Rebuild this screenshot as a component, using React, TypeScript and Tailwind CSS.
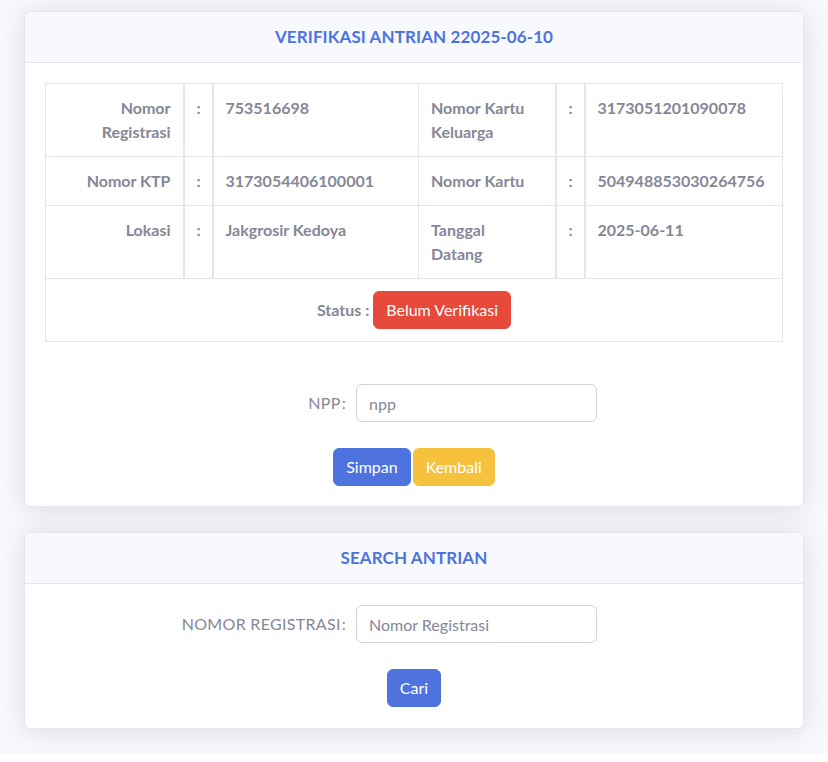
import React from "react";

const font = { fontFamily: "Lato, 'Noto Sans', sans-serif" };

function CardHeader({ title }: { title: string }) {
  return (
    <div className="bg-[#f8f9fc] border-b border-[#e3e6f0] py-[13px] text-center rounded-t-[6px]">
      <h6 className="text-[17px] leading-6 font-bold text-[#4e73df] tracking-[0.1px]">{title}</h6>
    </div>
  );
}

function Field({ label, placeholder }: { label: string; placeholder: string }) {
  return (
    <div className="flex items-center">
      <label className="w-[311px] pr-[10px] text-right text-[#858796] text-[16px] tracking-[0.3px]">
        {label}
        <span className="ml-[1px]">:</span>
      </label>
      <input
        placeholder={placeholder}
        className="w-[241px] h-[38px] px-3 border border-[#d1d3e2] rounded-[6px] text-[16px] text-[#6e707e] placeholder:text-[#858796] outline-none"
      />
    </div>
  );
}

const td = "border border-[#e3e6f0] p-3 align-top leading-6";

export default function App() {
  return (
    <div style={font} className="bg-[#f8f9fc] px-[24px] pt-[11px] pb-[25px] flex flex-col gap-[25px]">
      <div className="bg-white border border-[#e3e6f0] rounded-[6px] shadow-[0_2px_28px_0_rgba(58,59,69,0.15)]">
        <CardHeader title="VERIFIKASI ANTRIAN 22025-06-10" />
        <div className="p-5">
          <table className="w-full table-fixed border-collapse text-[16px] font-bold text-[#858796]">
            <colgroup>
              <col className="w-[138px]" />
              <col className="w-[29px]" />
              <col className="w-[206px]" />
              <col className="w-[137px]" />
              <col className="w-[29px]" />
              <col />
            </colgroup>
            <tbody>
              <tr>
                <td className={`${td} text-right`}>Nomor<br />Registrasi</td>
                <td className={`${td} border-x-2`}>:</td>
                <td className={td}>753516698</td>
                <td className={td}>Nomor Kartu<br />Keluarga</td>
                <td className={`${td} border-x-2`}>:</td>
                <td className={td}>3173051201090078</td>
              </tr>
              <tr>
                <td className={`${td} text-right`}>Nomor KTP</td>
                <td className={`${td} border-x-2`}>:</td>
                <td className={td}>3173054406100001</td>
                <td className={td}>Nomor Kartu</td>
                <td className={`${td} border-x-2`}>:</td>
                <td className={td}>504948853030264756</td>
              </tr>
              <tr>
                <td className={`${td} text-right`}>Lokasi</td>
                <td className={`${td} border-x-2`}>:</td>
                <td className={td}>Jakgrosir Kedoya</td>
                <td className={td}>Tanggal<br />Datang</td>
                <td className={`${td} border-x-2`}>:</td>
                <td className={td}>2025-06-11</td>
              </tr>
              <tr>
                <td colSpan={6} className="border border-[#e3e6f0] p-3 text-center">
                  Status :{" "}
                  <span className="inline-block bg-[#e74a3b] border border-[#e74a3b] text-white font-normal rounded-[6px] px-3 py-[6px] leading-6">
                    Belum Verifikasi
                  </span>
                </td>
              </tr>
            </tbody>
          </table>

          <div className="mt-[42px]">
            <Field label="NPP" placeholder="npp" />
          </div>
          <div className="mt-[26px] flex justify-center gap-[2px]">
            <button className="bg-[#4e73df] text-white text-[16px] leading-6 px-3 py-[6px] rounded-[6px] border border-[#4e73df]">
              Simpan
            </button>
            <button className="bg-[#f6c23e] text-white text-[16px] leading-6 px-3 py-[6px] rounded-[6px] border border-[#f6c23e]">
              Kembali
            </button>
          </div>
        </div>
      </div>

      <div className="bg-white border border-[#e3e6f0] rounded-[6px] shadow-[0_2px_28px_0_rgba(58,59,69,0.15)]">
        <CardHeader title="SEARCH ANTRIAN" />
        <div className="px-5 pt-[21px] pb-[21px]">
          <Field label="NOMOR REGISTRASI" placeholder="Nomor Registrasi" />
          <div className="mt-[26px] flex justify-center">
            <button className="bg-[#4e73df] text-white text-[16px] leading-6 px-3 py-[6px] rounded-[6px] border border-[#4e73df]">
              Cari
            </button>
          </div>
        </div>
      </div>
    </div>
  );
}
